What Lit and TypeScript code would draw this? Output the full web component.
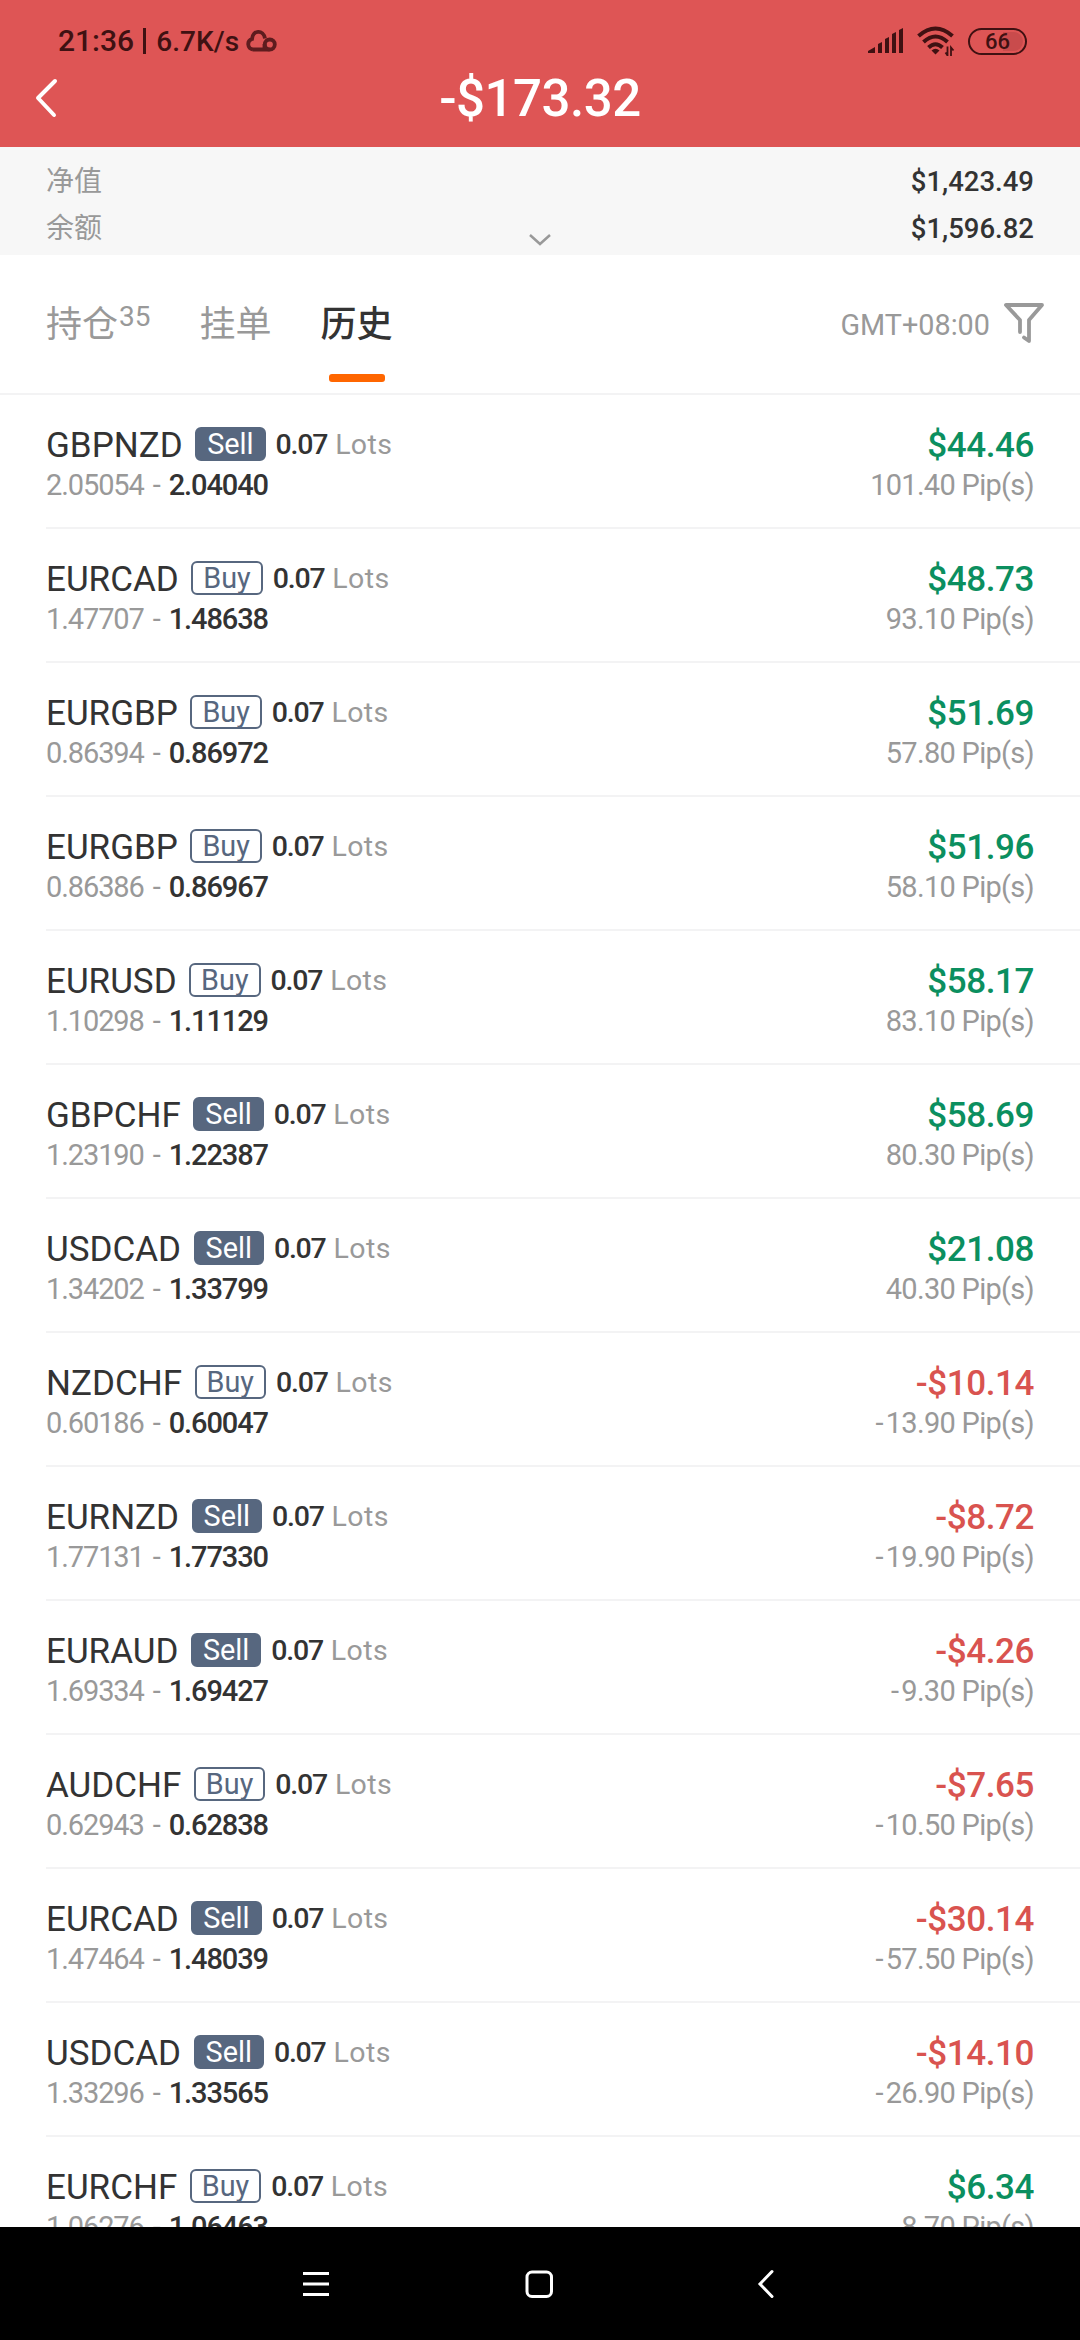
import { LitElement, html, css } from "lit";
import { customElement, property } from "lit/decorators.js";
import { classMap } from "lit/directives/class-map.js";

interface Trade {
  symbol: string;
  side: "Buy" | "Sell";
  open: string;
  close: string;
  profit: string;
  pips: string;
}

const t = (symbol: string, side: "Buy" | "Sell", open: string, close: string, profit: string, pips: string): Trade =>
  ({ symbol, side, open, close, profit, pips });

const TRADES: Trade[] = [
  t("GBPNZD", "Sell", "2.05054", "2.04040", "$44.46", "101.40"),
  t("EURCAD", "Buy", "1.47707", "1.48638", "$48.73", "93.10"),
  t("EURGBP", "Buy", "0.86394", "0.86972", "$51.69", "57.80"),
  t("EURGBP", "Buy", "0.86386", "0.86967", "$51.96", "58.10"),
  t("EURUSD", "Buy", "1.10298", "1.11129", "$58.17", "83.10"),
  t("GBPCHF", "Sell", "1.23190", "1.22387", "$58.69", "80.30"),
  t("USDCAD", "Sell", "1.34202", "1.33799", "$21.08", "40.30"),
  t("NZDCHF", "Buy", "0.60186", "0.60047", "-$10.14", "-13.90"),
  t("EURNZD", "Sell", "1.77131", "1.77330", "-$8.72", "-19.90"),
  t("EURAUD", "Sell", "1.69334", "1.69427", "-$4.26", "-9.30"),
  t("AUDCHF", "Buy", "0.62943", "0.62838", "-$7.65", "-10.50"),
  t("EURCAD", "Sell", "1.47464", "1.48039", "-$30.14", "-57.50"),
  t("USDCAD", "Sell", "1.33296", "1.33565", "-$14.10", "-26.90"),
  t("EURCHF", "Buy", "1.06276", "1.06463", "$6.34", "8.70"),
];

@customElement("trade-row")
export class TradeRow extends LitElement {
  @property({ attribute: false }) trade!: Trade;

  static styles = css`
    :host {
      display: flex;
      justify-content: space-between;
      box-sizing: border-box;
      flex: none;
      height: 134px;
      margin-left: 46px;
      padding: 26px 46px 0 0;
      border-bottom: 2px solid #f3f3f4;
      color: #333;
      white-space: nowrap;
    }
    .left, .right { display: flex; flex-direction: column; }
    .right { align-items: flex-end; }
    .top { display: flex; align-items: center; height: 48px; }
    .symbol { font-size: 35px; line-height: 48px; padding-top: 1px; }
    .side {
      box-sizing: border-box;
      height: 34px;
      margin: -2px 10px 0 12.5px;
      padding: 0 10px;
      border: 2px solid #57677f;
      border-radius: 6px;
      color: #57677f;
      font-size: 28.8px;
      line-height: 31px;
    }
    .side.sell { background: #57677f; color: #fff; }
    .lots { font-size: 28.5px; font-weight: 500; letter-spacing: -1.2px; line-height: 48px; }
    .muted { color: #999; }
    .unit { font-weight: 400; letter-spacing: 0.4px; margin-left: 2px; }
    .prices { display: flex; font-size: 29px; font-weight: 500; letter-spacing: -1.1px; line-height: 33px; }
    .open { font-weight: 400; }
    .dash { font-weight: 400; margin: 0 9px; }
    .profit { font-size: 35px; font-weight: 500; line-height: 49px; letter-spacing: -0.4px; color: #0b8f5f; }
    .profit.loss { color: #d9534f; }
    .pips { display: flex; font-size: 29px; letter-spacing: -0.7px; line-height: 31px; color: #999; }
    .sign { margin-right: 3px; }
  `;

  render() {
    const r = this.trade;
    const negative = r.pips.startsWith("-");
    return html`
      <div class="left">
        <div class="top">
          <span class="symbol">${r.symbol}</span>
          <span class=${classMap({ side: true, sell: r.side === "Sell" })}>${r.side}</span>
          <span class="lots">0.07 <span class="muted unit">Lots</span></span>
        </div>
        <div class="prices"><span class="muted open">${r.open}</span><span class="muted dash">-</span><span>${r.close}</span></div>
      </div>
      <div class="right">
        <span class=${classMap({ profit: true, loss: negative })}>${r.profit}</span>
        <span class="pips">${negative ? html`<span class="sign">-</span>` : ""}<span>${r.pips.replace("-", "")} Pip(s)</span></span>
      </div>
    `;
  }
}

@customElement("app-root")
export class AppRoot extends LitElement {
  static styles = css`
    :host {
      display: flex;
      flex-direction: column;
      width: 1080px;
      height: 2340px;
      overflow: hidden;
      background: #fff;
      font-family: Roboto, "Noto Sans CJK SC", sans-serif;
      color: #333;
    }
    svg { display: block; flex: none; fill: none; }
    .header { height: 147px; flex: none; background: #de5555; }
    .status {
      display: flex;
      align-items: center;
      height: 62px;
      box-sizing: border-box;
      padding: 20px 53px 0 58px;
      color: #3f1112;
      line-height: 42px;
      white-space: nowrap;
    }
    .clock { font-size: 30px; font-weight: 500; }
    .bar { width: 3px; height: 26px; margin: 0 10px 0 9px; background: #3f1112; }
    .speed { font-size: 28px; font-weight: 500; letter-spacing: 0.1px; padding-top: 2px; }
    .cloud { margin-left: 6px; }
    .signal { margin-left: auto; }
    .wifi { margin: 0 13px; }
    .battery {
      box-sizing: border-box;
      width: 59px;
      height: 27px;
      border: 2.5px solid #3f1112;
      border-radius: 14px;
      font-size: 22px;
      font-weight: 500;
      line-height: 23px;
      text-align: center;
      background: linear-gradient(90deg, transparent 60%, #c94b4c 60%) content-box;
      padding: 2px;
      line-height: 19px;
    }
    .titlebar { display: grid; grid-template-columns: 100px 1fr 100px; align-items: center; height: 70px; }
    .back { margin-left: 34px; }
    .title { color: #fff; font-size: 51px; font-weight: 500; letter-spacing: -0.5px; text-align: center; line-height: 70px; padding-top: 2px; }
    .account {
      display: grid;
      grid-template-columns: 1fr 24px 1fr;
      grid-template-rows: 47px 47px;
      flex: none;
      box-sizing: border-box;
      height: 108px;
      padding: 11px 46px 0;
      background: #f7f7f7;
      line-height: 47px;
    }
    .label { font-size: 28px; color: #999; }
    .value { grid-column: 3; text-align: right; font-size: 27.5px; font-weight: 500; }
    .more { grid-column: 2; align-self: end; margin-bottom: 5px; }
    .tabs {
      display: flex;
      flex: none;
      height: 138px;
      border-bottom: 2px solid #f3f3f4;
      padding: 0 34px 0 46px;
      align-items: flex-start;
    }
    .tab { display: flex; position: relative; height: 138px; font-size: 36px; line-height: 140px; color: #999; white-space: nowrap; }
    .tab + .tab { margin-left: 49px; }
    .count { font-size: 28px; line-height: 123px; margin-left: 1px; }
    .active { color: #333; font-weight: 500; }
    .active::after {
      content: "";
      position: absolute;
      left: 8px;
      top: 119px;
      width: 56px;
      height: 8px;
      border-radius: 3px;
      background: #ff6600;
    }
    .zone { margin-left: auto; font-size: 28.8px; line-height: 140px; color: #999; }
    .filter { margin: 46px 0 0 12px; }
    .list { display: flex; flex-direction: column; flex: 1; min-height: 0; overflow: hidden; }
    .nav { display: grid; grid-template-columns: 223px 232px 19px; flex: none; height: 113px; background: #000; align-items: center; padding-left: 301px; }
  `;

  render() {
    const ink = "#3f1112";
    return html`
      <header class="header">
        <div class="status">
          <span class="clock">21:36</span>
          <span class="bar"></span>
          <span class="speed">6.7K/s</span>
          <svg class="cloud" width="32" height="26" viewBox="0 0 32 26" stroke="#5e1c1e" stroke-width="3.800">
            <path d="M8 21.500H24.500M8 21.500a5.400 5.400 0 0 1-1-10.500C7.500 2 18.500 1 20 10.500M19.500 21V16"/>
            <circle cx="24.800" cy="16.500" r="5"/>
          </svg>
          <svg class="signal" width="36" height="26" viewBox="0 0 36 26">
            <g fill=${ink}>
              <path d="M0 25v-2l7-4v6zM10 25V16l4-2v11zM17 25V11l4-2v16zM24 25V6l4-2v21zM31 25V2l4-2v25z"/>
            </g>
          </svg>
          <svg class="wifi" width="38" height="30" viewBox="0 0 38 30" stroke=${ink} stroke-width="4">
            <path d="M1.500 10Q18.500-5 35.500 10M6.500 16Q18.500 5 30.500 16M11.500 21.500Q18.500 15 25.500 21.500"/>
            <path d="M14.500 24.500q4-3.500 8 0l-4 4z" fill=${ink} stroke="none"/>
            <path d="M30.500 20.500v9.500M28.500 26.500l2 3M34 30v-8.500l2.500 3" stroke-width="1.800"/>
          </svg>
          <span class="battery">66</span>
        </div>
        <div class="titlebar">
          <svg class="back" width="26" height="40" viewBox="0 0 26 40" stroke="#fff" stroke-width="4" stroke-linecap="round" stroke-linejoin="round">
            <path d="M21 3 4 20 20 37"/>
          </svg>
          <div class="title">-$173.32</div>
        </div>
      </header>
      <section class="account">
        <span class="label">净值</span><span class="value">$1,423.49</span>
        <span class="label">余额</span>
        <svg class="more" width="24" height="14" viewBox="0 0 24 14" stroke="#999" stroke-width="2.500"><path d="M2 2l10 9L22 2"/></svg>
        <span class="value">$1,596.82</span>
      </section>
      <nav class="tabs">
        <div class="tab">持仓<span class="count">35</span></div>
        <div class="tab">挂单</div>
        <div class="tab active">历史</div>
        <span class="zone">GMT+08:00</span>
        <svg class="filter" width="44" height="44" viewBox="0 0 44 44" stroke="#999" stroke-width="3.800" stroke-linejoin="round" stroke-linecap="round">
          <path d="M18 31V19L4 4H40L27 19V40L22 36.500"/>
        </svg>
      </nav>
      <main class="list">${TRADES.map((r) => html`<trade-row .trade=${r}></trade-row>`)}</main>
      <footer class="nav">
        <svg width="30" height="30" viewBox="0 0 30 30" stroke="#fff" stroke-width="2.800"><path d="M2 4.500H28M2 15H28M2 25.500H28"/></svg>
        <svg width="30" height="30" viewBox="0 0 30 30" stroke="#fff" stroke-width="3"><rect x="3" y="3" width="24.500" height="24.500" rx="5"/></svg>
        <svg width="19" height="30" viewBox="0 0 19 30" stroke="#fff" stroke-width="3" stroke-linecap="round"><path d="M16 2.500 4 15 16 27.500"/></svg>
      </footer>
    `;
  }
}
